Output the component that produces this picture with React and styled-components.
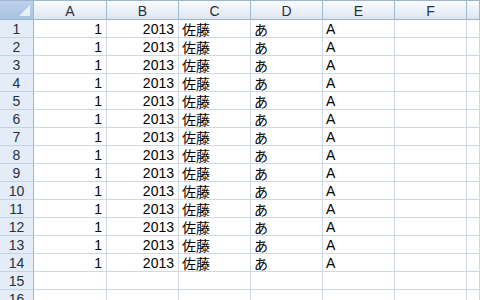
import * as React from "react";
import styled, { createGlobalStyle } from "styled-components";

const columns = ["A", "B", "C", "D", "E", "F", ""];
const widths = [33, 72, 71, 71, 71, 71, 71];

const rows = Array.from({ length: 16 }, (_, i) =>
  i < 14 ? [{ v: "1", num: true }, { v: "2013", num: true }, { v: "佐藤" }, { v: "あ" }, { v: "A" }, { v: "" }, { v: "" }] : Array.from({ length: 7 }, () => ({ v: "" }))
);

const GlobalStyle = createGlobalStyle`
  html, body {
    margin: 0;
    padding: 0;
    background: #ffffff;
    overflow: hidden;
  }
`;

const Sheet = styled.div`
  display: grid;
  grid-template-columns: 34px ${widths.slice(1).map((w) => `${w + 1}px`).join(" ")} 1fr;
  grid-auto-rows: 18px;
  grid-template-rows: 20px;
  width: 480px;
  height: 300px;
  overflow: hidden;
  font-family: "Liberation Sans", "Noto Sans CJK JP", sans-serif;
  font-size: 14px;
  color: #000;
`;

const Corner = styled.div`
  position: relative;
  box-sizing: border-box;
  border-top: 1px solid #9eb6ce;
  border-right: 1px solid #9eb6ce;
  border-bottom: 1px solid #9eb6ce;
  background: linear-gradient(#bdd1ea, #a9c2e4);

  &::after {
    content: "";
    position: absolute;
    right: 3px;
    bottom: 3px;
    width: 0;
    height: 0;
    border-left: 11px solid transparent;
    border-bottom: 11px solid #e9f0f9;
  }
`;

const ColHead = styled.div`
  box-sizing: border-box;
  display: flex;
  align-items: center;
  justify-content: center;
  border-top: 1px solid #9eb6ce;
  border-right: 1px solid #9eb6ce;
  border-bottom: 1px solid #9eb6ce;
  background: linear-gradient(#f9fbfd 0%, #eef3f9 45%, #dce5f1 100%);
  color: #27313e;
  padding-top: 1px;
`;

const RowHead = styled.div`
  box-sizing: border-box;
  display: flex;
  align-items: center;
  justify-content: center;
  border-right: 1px solid #9eb6ce;
  border-bottom: 1px solid #c5d3e5;
  background: #e4ecf7;
  color: #27313e;
`;

const Cell = styled.div`
  box-sizing: border-box;
  display: flex;
  align-items: center;
  justify-content: ${(p) => (p.$num ? "flex-end" : "flex-start")};
  padding: 1px ${(p) => (p.$num ? "4px" : "0")} 0 ${(p) => (p.$num ? "0" : "3px")};
  border-right: 1px solid #d0d7e5;
  border-bottom: 1px solid #d0d7e5;
  white-space: nowrap;
  overflow: hidden;
`;

export default function App() {
  return (
    <>
      <GlobalStyle />
      <Sheet>
        <Corner />
        {columns.map((c, i) => (
          <ColHead key={i}>{c}</ColHead>
        ))}
        {rows.map((cells, r) => (
          <React.Fragment key={r}>
            <RowHead>{r + 1}</RowHead>
            {cells.map((cell, i) => (
              <Cell key={i} $num={cell.num}>
                {cell.v}
              </Cell>
            ))}
          </React.Fragment>
        ))}
      </Sheet>
    </>
  );
}
